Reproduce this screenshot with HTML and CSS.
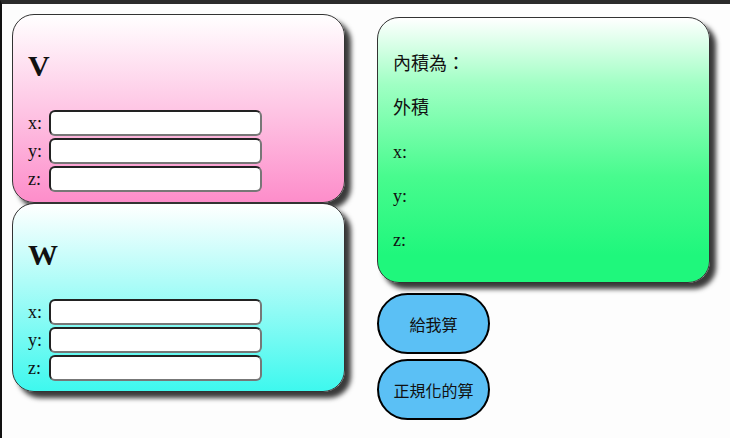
FILE: index.html
```html
<!DOCTYPE html>
<html lang="zh-Hant">
<head>
<meta charset="utf-8">
<title>向量計算</title>
<link rel="stylesheet" href="styles.css">
</head>
<body>
  <div class="left-col">
    <div class="panel panel-v">
      <h2 class="vec-title">V</h2>
      <div class="field"><label>x:</label><input type="text" class="num"></div>
      <div class="field"><label>y:</label><input type="text" class="num"></div>
      <div class="field"><label>z:</label><input type="text" class="num"></div>
    </div>
    <div class="panel panel-w">
      <h2 class="vec-title">W</h2>
      <div class="field"><label>x:</label><input type="text" class="num"></div>
      <div class="field"><label>y:</label><input type="text" class="num"></div>
      <div class="field"><label>z:</label><input type="text" class="num"></div>
    </div>
  </div>
  <div class="right-col">
    <div class="panel panel-result">
      <p class="line">內積為：</p>
      <p class="line">外積</p>
      <p class="line">x:</p>
      <p class="line">y:</p>
      <p class="line">z:</p>
    </div>
    <div class="buttons">
      <button class="calc-btn">給我算</button>
      <button class="calc-btn">正規化的算</button>
    </div>
  </div>
</body>
</html>
```
FILE: styles.css
```css
html {
  border-top: 4px solid #2b2b2b;
  border-left: 2px solid #111;
  background: #fdfdfd;
  height: 100%;
  box-sizing: border-box;
}
body {
  margin: 0;
  padding: 10px 0 0 10px;
  display: flex;
  align-items: flex-start;
  gap: 32px;
  font-family: "Liberation Serif", "Noto Sans CJK TC", serif;
  font-size: 18px;
  color: #111;
}
.left-col {
  width: 333px;
  display: flex;
  flex-direction: column;
}
.panel {
  box-sizing: border-box;
  width: 333px;
  border: 1px solid #333;
  border-radius: 22px;
  box-shadow: 6px 6px 5px #3a3a3a;
  padding: 10px 15px 10px;
  position: relative;
}
.panel-v {
  background: linear-gradient(#ffffff, #fd8dca);
  z-index: 1;
}
.panel-w {
  background: linear-gradient(#ffffff, #3ef8ee);
  z-index: 2;
}
.vec-title {
  font-size: 30px;
  line-height: 34px;
  margin: 24px 0 27px;
  font-weight: bold;
}
.field {
  display: flex;
  align-items: center;
  gap: 4px;
  height: 26px;
  margin-top: 2px;
}
.field:first-of-type {
  margin-top: 0;
}
.field label {
  width: 17px;
}
.num {
  box-sizing: border-box;
  width: 213px;
  height: 26px;
  margin: 0;
  border: 2px solid;
  border-color: #222 #777 #777 #222;
  border-radius: 6px;
  background: #fff;
}
.right-col {
  margin-top: 3px;
  display: flex;
  flex-direction: column;
}
.panel-result {
  height: 266px;
  padding: 15px 15px 11px;
  background: linear-gradient(#ffffff, #a0ffc4 25%, #48fb8e 60%, #1ff77c 90%);
}
.line {
  margin: 18px 0;
  line-height: 26px;
}
.buttons {
  margin-top: 10px;
  display: flex;
  flex-direction: column;
  gap: 5px;
}
.calc-btn {
  box-sizing: border-box;
  width: 113px;
  height: 61px;
  border: 2px solid #000;
  border-radius: 31px;
  background: #5bc0f5;
  font-family: "Noto Sans CJK TC", sans-serif;
  font-size: 16px;
  color: #111;
  padding: 0;
}
```
